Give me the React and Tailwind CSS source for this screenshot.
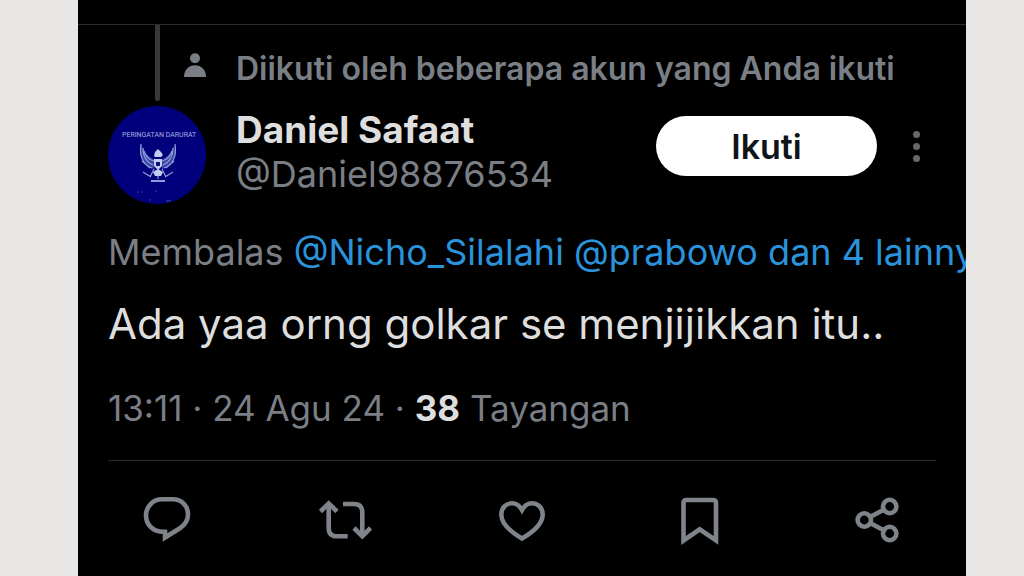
import React from "react";

const actions = [
  {
    label: "Balas",
    icon: (
      <path d="M22 6.3H33C41.5 6.3 48 12.5 48 21.5C48 27.5 45 32 39.5 35.5L25 44.5V38.7H22C13 38.7 6 31.5 6 22.5S13 6.3 22 6.3Z" />
    ),
  },
  {
    label: "Posting ulang",
    icon: (
      <>
        <path d="M2.5 18.5L10.7 10.5L19 18.5M10.7 11V35Q10.7 43.3 19 43.3H29.7" />
        <path d="M25 11H36Q44.3 11 44.3 19.3V43M36 35L44.3 43.3L52.6 35" />
      </>
    ),
  },
  {
    label: "Suka",
    icon: (
      <path d="M27 17C24.5 12.5 21 10.3 17 10.3C11 10.3 6.3 15 6.3 21.5C6.3 31 15 38.5 27 45.5C39 38.5 47.7 31 47.7 21.5C47.7 15 43 10.3 37 10.3C33 10.3 29.5 12.5 27 17Z" />
    ),
  },
  {
    label: "Markah",
    icon: <path d="M13.5 7H40Q43 7 43 10V47.5L26.7 36.3L10.5 47.5V10Q10.5 7 13.5 7Z" />,
  },
  {
    label: "Bagikan",
    icon: (
      <>
        <circle cx="14.3" cy="27" r="6.7" />
        <circle cx="39.7" cy="13.5" r="6.7" />
        <circle cx="39.7" cy="40.5" r="6.7" />
        <path d="M20.5 23.7L33.8 16.7M20.5 30.3L33.8 37.3" />
      </>
    ),
  },
];

const Avatar = () => (
  <svg viewBox="0 0 98 98" className="w-full" role="img" aria-label="Daniel Safaat">
    <circle cx="49" cy="49" r="49" fill="#00007c" />
    <text x="14" y="31" fontSize="7" fill="#a9aee0" fontFamily="Roboto, sans-serif">
      PERINGATAN DARURAT
    </text>
    {/* Garuda */}
    <g fill="#3a45a8">
      <path d="M33 38C30 50 35 60 46 63L47 54C40 51 36 46 33 38Z" />
      <path d="M67 38C70 50 65 60 54 63L53 54C60 51 64 46 67 38Z" />
    </g>
    <g fill="none" stroke="#8d9bd8" strokeWidth="1.2">
      <path d="M33 38C31 50 35 59 44 62M35 42C35 51 38 56 45 59M36 45C38 51 41 54 46 55M34 55L42 62" />
      <path d="M67 38C69 50 65 59 56 62M65 42C65 51 62 56 55 59M64 45C62 51 59 54 54 55M66 55L58 62" />
      <path d="M46 63L42 71M50 64V73M54 63L58 71M35 66L43 71M65 66L57 71" />
    </g>
    <g fill="#c3cdf2">
      <path d="M46 50L47 46L50 43L53 46L55 49L53 51H47Z" />
      <path d="M46 53H54V60L50 64L46 60Z" />
      <path d="M45 66L50 63L55 66L53 70H47Z" />
      <path d="M43 74H57V76H43Z" fill="#8d9bd8" />
    </g>
    <path d="M48 56H52V60H48Z" fill="#10107c" />
    <path d="M29 86H31M34 86H35M47 85H49M41 94H43M58 95H63" stroke="#4046b0" />
  </svg>
);

const App = () => {
  return (
    <div className="flex min-h-screen bg-[#e8e7e5] pl-[78px] pr-[58px] font-['Inter',sans-serif]">
      <article className="min-w-0 flex-1 overflow-hidden bg-black pt-6 text-[#7a7f86]">
        <div className="border-t border-[#2b2c2e] px-[30px]">
          {/* Thread line and social context */}
          <div className="flex gap-[30px]">
            <div className="flex w-[98px] shrink-0 justify-between pl-[47px]">
              <div className="h-[76px] w-[5px] rounded-b bg-[#37383b]" />
              <svg viewBox="0 0 22 24" className="mt-7 h-6 w-[22px]" fill="currentColor" aria-hidden="true">
                <circle cx="11" cy="5.3" r="5" />
                <path d="M0 24C0 17 4.5 12.2 11 12.2S22 17 22 24Z" />
              </svg>
            </div>
            <p className="pt-6 text-[32px] leading-10 font-semibold whitespace-nowrap">
              Diikuti oleh beberapa akun yang Anda ikuti
            </p>
          </div>

          {/* Author */}
          <header className="mt-[5px] flex gap-[30px]">
            <div className="w-[98px] shrink-0">
              <Avatar />
            </div>
            <div className="min-w-0 flex-1 pt-[2px]">
              <h1 className="text-[37px] leading-[44px] font-bold whitespace-nowrap text-[#dedede]">Daniel Safaat</h1>
              <p className="text-[36px] leading-[44px]">@Daniel98876534</p>
            </div>
            <div className="flex items-center gap-9 self-start pt-[10px] pr-4">
              <button className="h-[60px] w-[221px] rounded-full bg-white text-[34px] font-semibold text-[#0f1419]">
                Ikuti
              </button>
              <button aria-label="Lainnya" className="flex flex-col gap-[5px]">
                <span className="size-[7px] rounded-full bg-[#66686b]" />
                <span className="size-[7px] rounded-full bg-[#66686b]" />
                <span className="size-[7px] rounded-full bg-[#66686b]" />
              </button>
            </div>
          </header>

          <p className="mt-6 text-[36px] leading-[48px] whitespace-nowrap">
            Membalas{" "}
            <a href="#balasan" className="text-[#2b93dc]">
              @Nicho_Silalahi @prabowo dan 4 lainnya
            </a>
          </p>

          <p className="mt-[18px] text-[42px] leading-[60px] whitespace-nowrap text-[#dedede]">
            Ada yaa orng golkar se menjijikkan itu..
          </p>

          <p className="mt-[30px] text-[35px] leading-[48px] whitespace-nowrap">
            13:11 · 24 Agu 24 · <strong className="font-bold text-[#dedede]">38</strong> Tayangan
          </p>

          <div className="mt-7 flex justify-between border-t border-[#2b2c2e] px-8 pt-8">
            {actions.map((action) => (
              <button key={action.label} aria-label={action.label} className="text-[#7f838a]">
                <svg viewBox="0 0 54 54" className="size-[54px]" fill="none" stroke="currentColor" strokeWidth="4.6">
                  {action.icon}
                </svg>
              </button>
            ))}
          </div>
        </div>
      </article>
    </div>
  );
};

export default App;
